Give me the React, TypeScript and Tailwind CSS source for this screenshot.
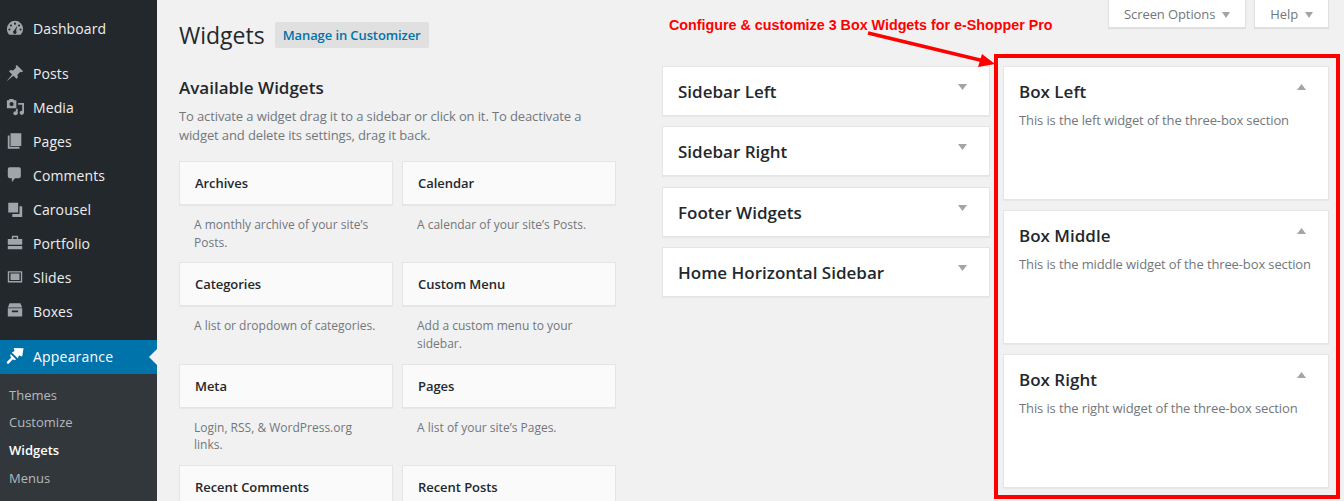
const menuIcons: Record<string, React.ReactNode> = {
  Dashboard: (
    <path fillRule="evenodd" d="M10 2a9 9 0 0 0-9 9c0 2.600 1.100 4.900 2.800 6.500h12.400A9 9 0 0 0 19 11a9 9 0 0 0-9-9zM10 4a1.200 1.200 0 1 1 0 2.400a1.200 1.200 0 0 1 0-2.400zM5.500 6a1.200 1.200 0 1 1 0 2.400a1.200 1.200 0 0 1 0-2.400zM14.500 6a1.200 1.200 0 1 1 0 2.400a1.200 1.200 0 0 1 0-2.400zM3.800 10.500a1.200 1.200 0 1 1 0 2.400a1.200 1.200 0 0 1 0-2.400zM16.200 10.500a1.200 1.200 0 1 1 0 2.400a1.200 1.200 0 0 1 0-2.400zM12.500 7.500l-1.300 5.600a2 2 0 1 1-2.200-.4z" />
  ),
  Posts: <path d="M12 1l7 7-1.400 1.200-1.500-.6-3.400 3.400.4 3.200-1.400 1.300-3.400-3.400L1 19l-.2-.2 6-7.200L3.400 8.200l1.300-1.400 3.200.4 3.400-3.400-.6-1.500z" />,
  Media: (
    <g>
      <path fillRule="evenodd" d="M1 2.500h2l1-1.500h4l1 1.500h2.500v9H1zM6.200 4.500a2.300 2.300 0 1 0 0 4.600a2.300 2.300 0 0 0 0-4.600z" />
      <path d="M13.500 5.500H20V17h-2V7.500h-4.500z" />
      <circle cx="17.500" cy="16.500" r="2.300" />
      <path d="M11 12h2v5.500h-2z" />
      <circle cx="10.500" cy="17" r="2.300" />
    </g>
  ),
  Pages: <path d="M5 1.500h12v14H5zM2 4h2v12.500h11v2H2z" />,
  Comments: <path d="M4 1.500h10.500a2 2 0 0 1 2 2v8a2 2 0 0 1-2 2H10l-3.500 4.500V13.500H4a2 2 0 0 1-2-2v-8a2 2 0 0 1 2-2z" />,
  Carousel: <path d="M2.500 3h11v11h-11zM15 7h3v12H7v-3.500h8z" />,
  Portfolio: (
    <path fillRule="evenodd" d="M6.500 2h7v3.500H18V12H2V5.500h4.500zM8 3.500v2h4v-2zM2 13.200h16V17H2z" />
  ),
  Slides: <path fillRule="evenodd" d="M2 3.500h16V16H2zM3.500 5v9.500h13V5zM5 6.200h10v7H5z" />,
  Boxes: <path fillRule="evenodd" d="M4 1.500h12l2 4.500H2zM2 7h16v9H2zM6.500 9.500v2h7v-2z" />,
  Appearance: (
    <path d="M19.500 1.500l-1.500 9-3.500-1-1.500 3-6.500-6.500 3-1.500-1-3.500zM5.200 7.800l6 6-2 1-1.500-1.300-4.500 4.700c-.6.600-1.500.600-2 0s-.5-1.400.1-2l4.700-4.500-1.300-1.500z" />
  ),
};

const menu = ["Posts", "Media", "Pages", "Comments", "Carousel", "Portfolio", "Slides", "Boxes"];

const available = [
  { name: "Archives", desc: "A monthly archive of your site’s Posts." },
  { name: "Calendar", desc: "A calendar of your site’s Posts." },
  { name: "Categories", desc: "A list or dropdown of categories." },
  { name: "Custom Menu", desc: "Add a custom menu to your sidebar." },
  { name: "Meta", desc: "Login, RSS, & WordPress.org links." },
  { name: "Pages", desc: "A list of your site’s Pages." },
  { name: "Recent Comments", desc: "" },
  { name: "Recent Posts", desc: "" },
];

const boxes = [
  { name: "Box Left", desc: "This is the left widget of the three-box section" },
  { name: "Box Middle", desc: "This is the middle widget of the three-box section" },
  { name: "Box Right", desc: "This is the right widget of the three-box section" },
];

function MenuIcon({ name, active }: { name: string; active?: boolean }) {
  return (
    <svg viewBox="0 0 20 20" className={`h-[18px] w-[18px] shrink-0 ${active ? "fill-white" : "fill-[#a0a5aa]"}`}>
      {menuIcons[name]}
    </svg>
  );
}

function MenuRow({ name }: { name: string }) {
  return (
    <div className="flex h-[34px] items-center gap-[9px] pb-[2px] pl-[6px] text-[14px] tracking-[0.1px] text-[#eee]">
      <MenuIcon name={name} />
      {name}
    </div>
  );
}

function Caret({ up, className }: { up?: boolean; className?: string }) {
  return (
    <svg viewBox="0 0 10 7" preserveAspectRatio="none" className={`h-[6px] shrink-0 fill-[#a0a5aa] ${className ?? ""}`}>
      <path d={up ? "M5 0l5 7H0z" : "M0 0h10L5 7z"} />
    </svg>
  );
}

function MetaTab({ label }: { label: string }) {
  return (
    <div className="flex h-[28px] items-center gap-[7px] border border-t-0 border-[#e1e1e1] bg-white px-[15px] pt-[2px] text-[13px] tracking-[-0.1px] text-[#72777c] shadow-[0_1px_1px_rgba(0,0,0,0.08)]">
      {label}
      <Caret className="w-[8px]" />
    </div>
  );
}

export default function App() {
  return (
    <div className="relative flex h-[501px] w-[1344px] overflow-hidden bg-[#f1f1f1] font-['Open_Sans',sans-serif]">
      {/* admin menu */}
      <aside className="w-[157px] shrink-0 bg-[#23282d] pt-[12px]">
        <MenuRow name="Dashboard" />
        <div className="h-[11px]" />
        {menu.map((m) => (
          <MenuRow key={m} name={m} />
        ))}
        <div className="h-[11px]" />
        <div className="relative flex h-[34px] items-center gap-[9px] bg-[#0073aa] pb-[2px] pl-[6px] text-[14px] tracking-[0.2px] text-white">
          <MenuIcon name="Appearance" active />
          Appearance
          <div className="absolute right-0 top-[9px] h-0 w-0 border-y-[8px] border-r-[8px] border-y-transparent border-r-[#f1f1f1]" />
        </div>
        <div className="h-[200px] bg-[#32373c] pl-[9px] pt-[7.700px] text-[13px] leading-[27.700px] text-[#b4b9be]">
          <div>Themes</div>
          <div>Customize</div>
          <div className="font-semibold text-white">Widgets</div>
          <div>Menus</div>
          <div>Background</div>
        </div>
      </aside>

      <main className="flex min-w-0 flex-1 pl-[22px]">
        {/* available widgets */}
        <section className="w-[437px] shrink-0 pt-[16px]">
          <div className="flex h-[38px] items-center">
            <h1 className="text-[23px] leading-[29px] text-[#23282d]">Widgets</h1>
            <span className="ml-[10px] rounded-[2px] bg-[#e0e0e0] px-[8px] py-[4px] text-[13px] font-semibold leading-[18px] tracking-[-0.1px] text-[#0073aa]">
              Manage in Customizer
            </span>
          </div>
          <h2 className="mt-[22px] text-[17px] font-semibold leading-[24px] text-[#23282d]">Available Widgets</h2>
          <p className="mt-[7px] text-[13px] leading-[19px] tracking-[-0.12px] text-[#72777c]">
            To activate a widget drag it to a sidebar or click on it. To deactivate a widget and delete its settings, drag it back.
          </p>
          <div className="mt-[16px] grid grid-cols-[214px_214px] gap-x-[9px]">
            {available.map((w) => (
              <div key={w.name} className="h-[101.400px]">
                <div className="flex h-[44px] items-center border border-[#e5e5e5] bg-[#fafafa] pl-[15px] pt-[1px] text-[13px] font-semibold tracking-[-0.05px] text-[#23282d] shadow-[0_1px_1px_rgba(0,0,0,0.04)]">
                  {w.name}
                </div>
                <p className="mt-[11px] pl-[15px] pr-[15px] text-[12px] leading-[17.500px] text-[#72777c]">{w.desc}</p>
              </div>
            ))}
          </div>
        </section>

        <div className="ml-[46px] flex w-[667px] shrink-0 flex-col">
          {/* screen meta tabs */}
          <div className="flex justify-end gap-[8px]">
            <MetaTab label="Screen Options" />
            <MetaTab label="Help" />
          </div>

          <div className="mt-[38px] flex gap-[13px]">
            {/* sidebars */}
            <section className="flex w-[328px] shrink-0 flex-col gap-[10.400px]">
              {["Sidebar Left", "Sidebar Right", "Footer Widgets", "Home Horizontal Sidebar"].map((s) => (
                <div key={s} className="flex h-[50px] items-start justify-between border border-[#e5e5e5] bg-white pl-[15px] pr-[22px] shadow-[0_1px_1px_rgba(0,0,0,0.04)]">
                  <h3 className="mt-[13px] text-[17px] font-semibold leading-[24px] text-[#23282d]">{s}</h3>
                  <Caret className="mt-[17px] w-[9px]" />
                </div>
              ))}
            </section>

            <section className="flex w-[326px] shrink-0 flex-col gap-[10px]">
              {boxes.map((b) => (
                <div key={b.name} className="h-[134px] border border-[#e5e5e5] bg-white pl-[15px] pr-[15px] shadow-[0_1px_1px_rgba(0,0,0,0.04)]">
                  <div className="flex items-start justify-between pr-[7px]">
                    <h3 className="mt-[13px] text-[17px] font-semibold leading-[24px] text-[#23282d]">{b.name}</h3>
                    <Caret up className="mt-[17px] w-[9px]" />
                  </div>
                  <p className="mt-[7px] text-[13px] leading-[18px] tracking-[-0.12px] text-[#72777c]">{b.desc}</p>
                </div>
              ))}
            </section>
          </div>
        </div>
      </main>

      {/* annotation drawn over the screenshot */}
      <div className="absolute left-[669px] top-[17px] font-['Liberation_Sans',sans-serif] text-[14.300px] font-bold leading-[16px] text-[#ff0000]">
        Configure &amp; customize 3 Box Widgets for e-Shopper Pro
      </div>
      <svg className="absolute left-[860px] top-[25px]" width="140" height="45" viewBox="0 0 140 45">
        <path d="M8 8L122 35.500" stroke="#ff0000" strokeWidth="3.500" fill="none" />
        <path d="M135 39L122 29L118 42z" fill="#ff0000" />
      </svg>
      <div className="absolute left-[994px] top-[54px] h-[445px] w-[346px] border-[4px] border-[#ff0000]" />
    </div>
  );
}
